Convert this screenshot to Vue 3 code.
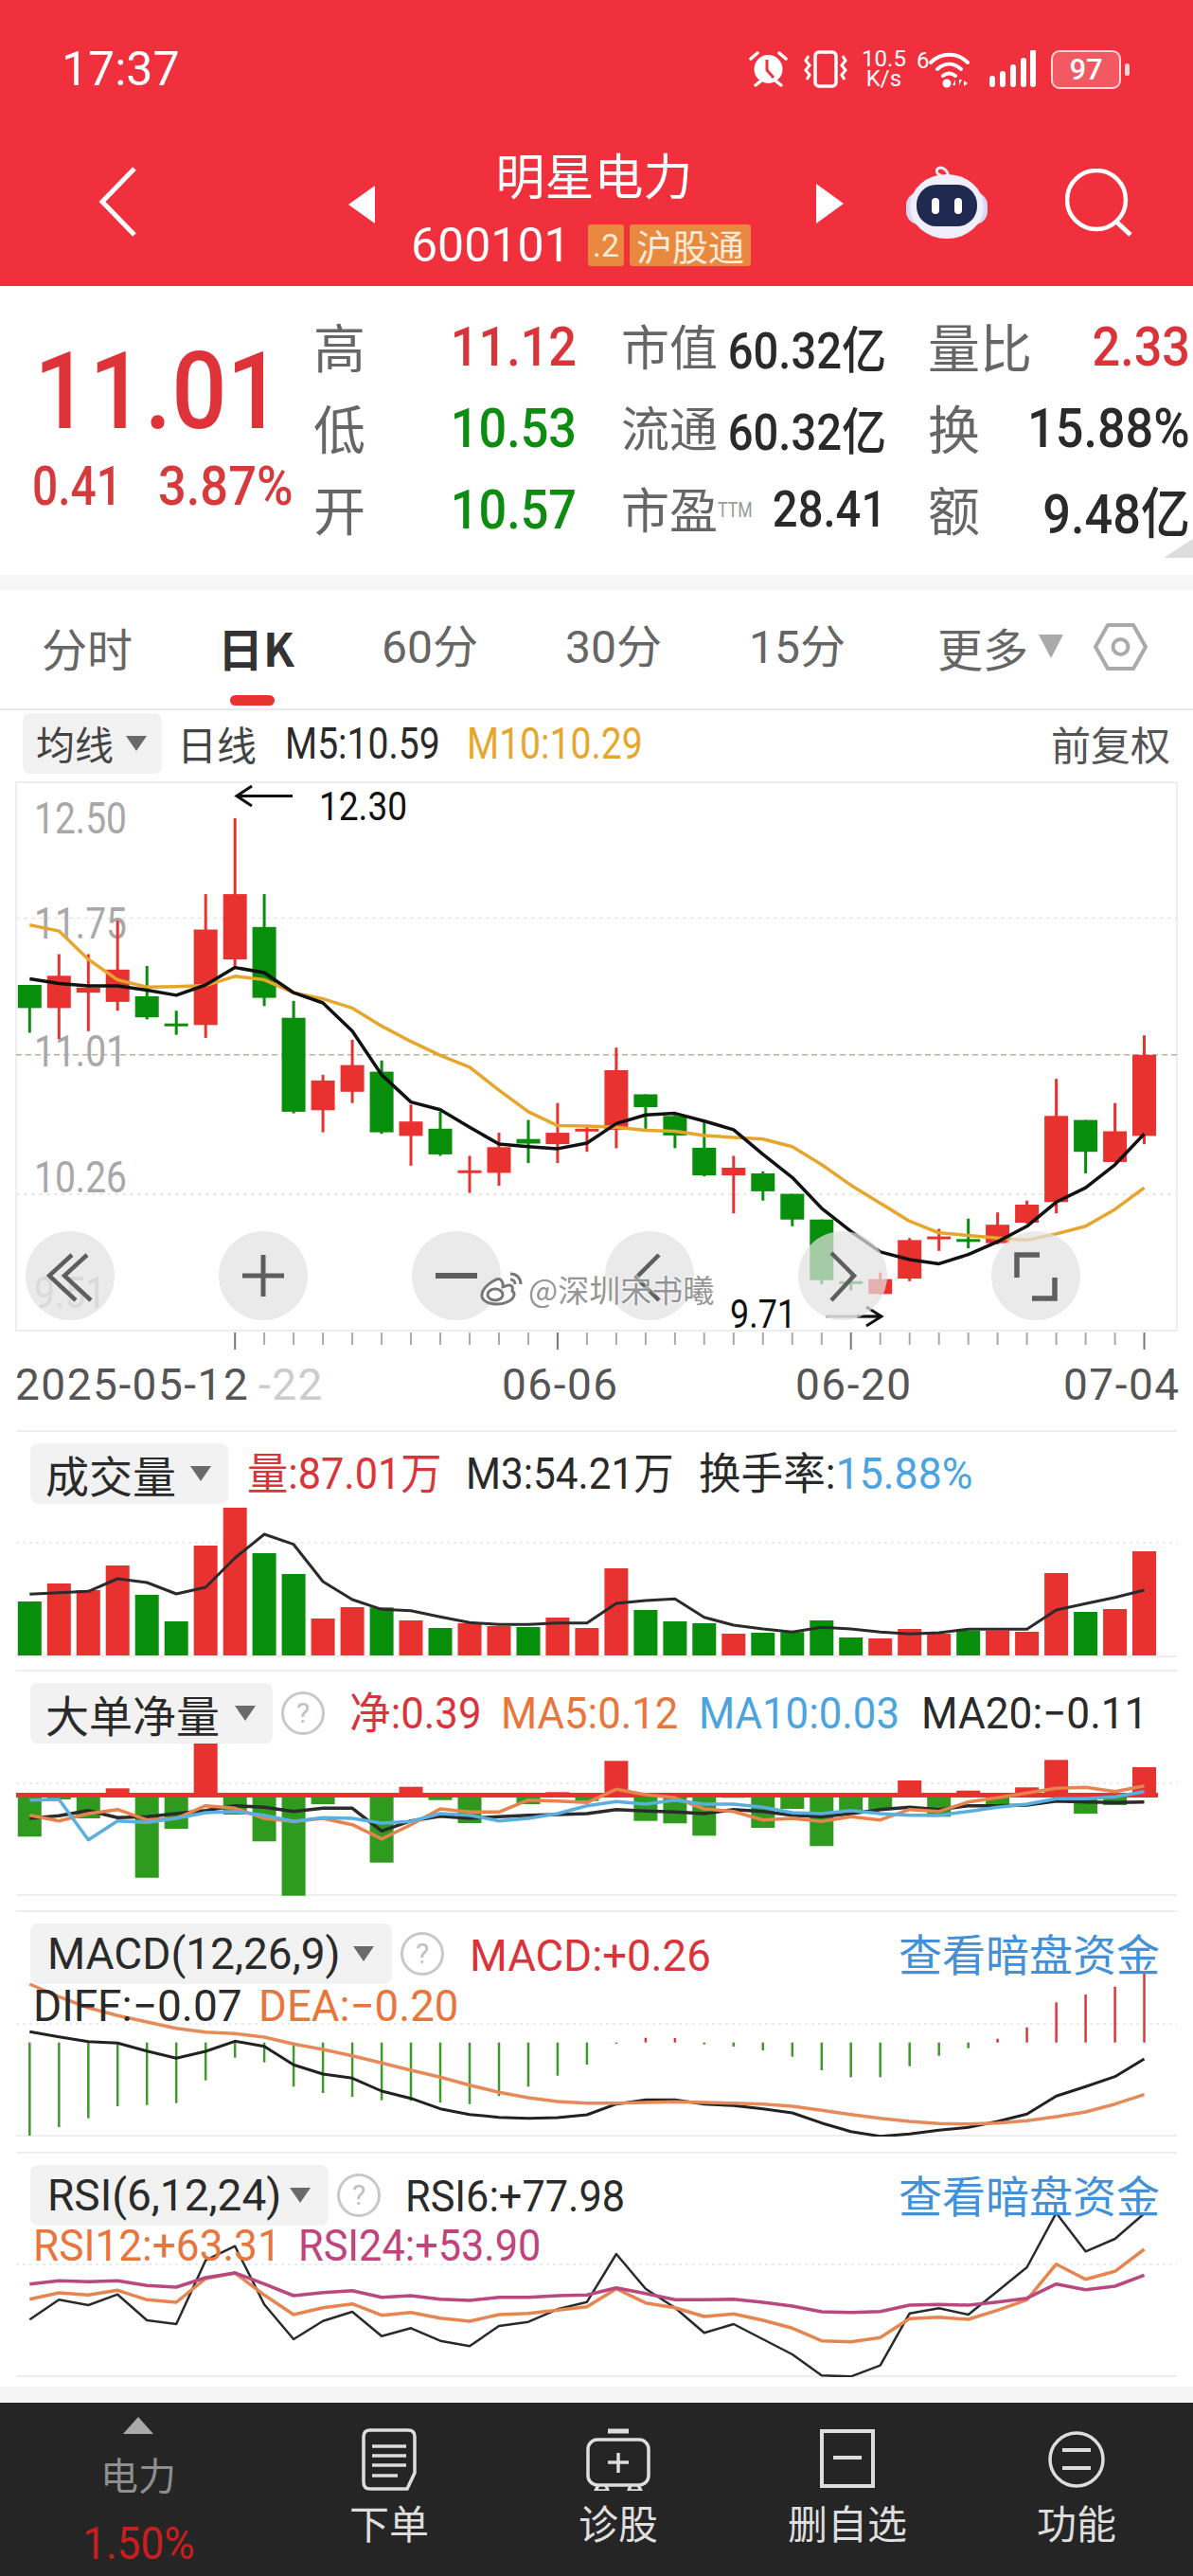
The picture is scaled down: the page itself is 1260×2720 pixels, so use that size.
<script setup>
const x = (i) => +(31.3 + i * 30.98).toFixed(1)
const kY = (z) => +(620 + z * 0.542).toFixed(1)
const y3 = (base) => (z) => +(base + z / 3).toFixed(1)
const y1490 = y3(1490)
const y2000 = y3(2000)
const R = '#e8322f'
const G = '#078e0a'
const G2 = '#2e9b1f'
const pts = (a, f) => a.map((v, i) => `${x(i)},${f(v)}`).join(' ')

const rawK = [
  [775,775,820,868,0],[715,757,820,880,1],[715,780,790,865,1],[650,745,808,825,1],[738,797,838,842,0],
  [825,850,853,872,0],[598,667,853,878,1],[450,598,725,740,1],[598,662,800,816,0],[806,839,1022,1025,0],
  [950,961,1019,1062,1],[882,931,983,1005,1],[922,944,1062,1065,0],[1008,1041,1069,1127,1],[1022,1055,1105,1108,0],
  [1108,1136,1139,1180,1],[1063,1091,1141,1166,1],[1038,1075,1084,1122,0],[1005,1063,1085,1122,1],[1050,1055,1058,1100,1],
  [897,941,1057,1093,1],[988,988,1013,1055,0],[1028,1030,1068,1093,0],[1040,1092,1146,1148,0],[1108,1131,1146,1220,1],
  [1138,1142,1177,1195,0],[1182,1182,1232,1245,0],[1232,1232,1350,1358,0],[1340,1352,1356,1370,0],[1335,1348,1377,1378,1],
  [1268,1272,1347,1352,1],[1250,1265,1268,1293,1],[1230,1270,1273,1288,0],[1218,1242,1278,1280,1],[1195,1203,1238,1240,1],
  [958,1030,1198,1220,1],[1038,1038,1100,1142,0],[1005,1060,1120,1120,1],[873,911,1069,1085,1]
]
const candles = rawK.map((c, i) => ({
  x: x(i), hi: kY(c[0]), top: kY(c[1]), h: Math.max(kY(c[2]) - kY(c[1]), 3), lo: kY(c[3]), c: c[4] ? R : G
}))
const ma5 = pts([763,772,777,777,785,795,775,741,751,790,810,865,950,1003,1018,1052,1085,1090,1094,1083,1045,1028,1025,1040,1057,1105,1150,1210,1255,1295,1310,1318,1300,1275,1245,1198,1170,1125,1065], kY)
const ma10 = pts([658,670,725,765,779,778,776,758,765,790,802,820,855,885,912,935,980,1022,1049,1050,1052,1058,1060,1068,1072,1075,1090,1125,1165,1200,1235,1258,1263,1268,1272,1260,1245,1212,1170], kY)
const ticks = Array.from({ length: 32 }, (_, i) => ({ x: x(i + 7), major: [0, 11, 21, 31].includes(i) }))
const buttons = ['dbl', 'plus', 'minus', 'left', 'right', 'full']

const volTops = [603,546,567,489,582,666,426,306,450,516,657,621,622,663,687,672,681,684,654,687,498,630,666,672,705,702,700,663,717,720,690,705,696,696,699,513,636,627,444]
const volUp = [0,1,1,1,0,0,1,1,0,0,1,1,0,1,0,1,1,0,1,1,1,0,0,0,1,0,0,0,0,1,1,1,0,1,1,1,0,1,1]
const volBars = volTops.map((t, i) => ({ x: x(i) - 12.5, y: y1490(t), h: 1748 - y1490(t), c: volUp[i] ? R : G }))
const volLine = pts([580,575,571,531,543,579,558,465,390,422,540,597,628,632,652,670,676,676,671,671,609,600,595,653,678,690,700,685,690,700,706,702,691,691,691,630,610,590,567], y1490)

const netEnds = [1348,1230,1290,1195,1478,1323,1030,1278,1363,1535,1245,1218,1430,1190,1232,1305,1212,1245,1207,1235,1108,1298,1306,1345,1225,1320,1260,1378,1270,1262,1170,1285,1202,1245,1192,1105,1275,1248,1128]
const base = y1490(1218)
const netBars = netEnds.map((e, i) => {
  const v = y1490(e)
  return { x: x(i) - 12.5, y: Math.min(v, base), h: Math.abs(v - base), c: v < base ? R : G2 }
})
const netMa5 = pts([1280,1298,1275,1262,1295,1290,1250,1258,1290,1300,1290,1310,1355,1310,1260,1270,1270,1232,1235,1240,1198,1215,1225,1260,1268,1295,1290,1300,1285,1295,1262,1268,1238,1225,1210,1195,1192,1205,1187], y1490)
const netMa10 = pts([1232,1230,1358,1298,1303,1290,1272,1268,1280,1300,1288,1290,1305,1300,1275,1280,1298,1290,1275,1250,1237,1245,1232,1245,1245,1255,1272,1275,1265,1275,1280,1280,1268,1255,1245,1228,1228,1222,1205], y1490)
const netMa20 = pts([1290,1282,1265,1288,1285,1275,1265,1250,1255,1268,1258,1258,1330,1298,1283,1290,1285,1280,1278,1275,1262,1267,1270,1275,1262,1268,1280,1285,1275,1262,1255,1262,1250,1250,1248,1235,1238,1240,1238], y1490)

const macdEnds = [765,738,710,672,668,662,590,518,533,610,630,642,653,655,660,665,640,610,575,540,474,455,456,476,483,495,515,558,580,580,545,512,488,458,422,343,318,293,250]
const macdBars = macdEnds.map((e, i) => ({
  x: x(i), y1: y2000(470), y2: y2000(e), c: e < 470 ? '#d8383a' : '#3f9a2c'
}))
const diff = pts([436,452,467,472,497,520,498,466,482,541,570,583,624,647,680,698,707,710,708,699,665,652,652,665,670,680,693,725,752,767,760,748,739,720,697,640,610,578,522], y2000)
const dea = pts([285,325,360,385,405,425,437,442,453,475,492,512,535,558,580,605,628,645,657,662,662,660,658,660,662,665,672,685,698,710,720,727,728,725,718,705,690,665,635], y2000)

const rsi6 = pts([1348,1285,1302,1268,1350,1362,1160,1115,1300,1410,1352,1323,1400,1375,1415,1432,1368,1355,1315,1292,1140,1250,1310,1390,1362,1410,1458,1525,1528,1493,1328,1312,1332,1258,1182,1010,1132,1092,1012], y2000)
const rsi12 = pts([1283,1263,1270,1255,1285,1293,1218,1200,1270,1332,1310,1298,1334,1325,1343,1353,1332,1328,1318,1307,1250,1295,1310,1338,1330,1350,1375,1415,1418,1405,1345,1340,1347,1318,1285,1172,1220,1195,1125], y2000)
const rsi24 = pts([1235,1225,1228,1225,1240,1245,1215,1200,1235,1272,1262,1256,1277,1272,1283,1287,1277,1277,1272,1270,1247,1265,1285,1285,1283,1293,1305,1323,1325,1322,1302,1300,1302,1292,1280,1235,1253,1242,1207], y2000)
</script>

<template>
  <div class="page">
    <header class="header">
      <div class="status">
        <span class="time">17:37</span>
        <svg class="st-alarm" width="41" height="40" viewBox="0 0 41 40">
          <circle cx="20.5" cy="20" r="15" fill="#fff" />
          <path d="M19 10v11l7 8" fill="none" stroke="#f0303c" stroke-width="3" />
          <path d="M2 9l7-6M39 9l-7-6M7 37l5-4M34 37l-5-4" fill="none" stroke="#fff" stroke-width="3.5" stroke-linecap="round" />
        </svg>
        <svg class="st-vib" width="48" height="40" viewBox="0 0 48 40">
          <rect x="13" y="2" width="22" height="36" rx="4" fill="none" stroke="#fff" stroke-width="3.5" />
          <path d="M6 6l-3 5 4 5-4 5 4 5-3 5M42 6l3 5-4 5 4 5-4 5 3 5" fill="none" stroke="#fff" stroke-width="3" />
        </svg>
        <span class="st-speed"><b>10.5</b><b>K/s</b></span>
        <span class="st-six">6</span>
        <svg class="st-wifi" width="43" height="40" viewBox="0 0 43 40">
          <path d="M2 13C13 2 30 2 41 13M9 20c8-7 17-7 25 0M15 27c4-3 9-3 13 0" fill="none" stroke="#fff" stroke-width="4" stroke-linecap="round" />
          <circle cx="19" cy="35" r="4.5" fill="#fff" />
          <path d="M28 31l-3 6h3zM32 37l3-6h-3zM37 32v6l4-3z" fill="#fff" />
        </svg>
        <svg class="st-signal" width="49" height="40" viewBox="0 0 49 40">
          <g stroke="#fff" stroke-width="6" stroke-linecap="round">
            <path d="M3 30v6M14 25v11M25 18v18M36 11v25M46 2v34" />
          </g>
        </svg>
        <span class="st-batt"><i>97</i></span>
        <span class="st-nub"></span>
      </div>
      <div class="titlebar">
        <svg class="back" width="41" height="74" viewBox="0 0 41 74">
          <path d="M38 2L4 37l34 35" fill="none" stroke="#fff" stroke-width="5" />
        </svg>
        <svg class="prev" width="28" height="40" viewBox="0 0 28 40"><path d="M28 0v40L0 20z" fill="#fff" /></svg>
        <div class="title-col">
          <div class="name">明星电力</div>
          <div class="code-row">
            <span class="code">600101</span>
            <span class="chip small">.2</span>
            <span class="chip">沪股通</span>
          </div>
        </div>
        <svg class="next" width="29" height="42" viewBox="0 0 29 42"><path d="M0 0v42l29-21z" fill="#fff" /></svg>
        <svg class="robot" width="86" height="80" viewBox="0 0 86 80">
          <path d="M37 12c-6-1-6-7-1-8 4 0 7 2 9 9" fill="none" stroke="#f4e6ee" stroke-width="3" />
          <rect x="0" y="30" width="86" height="34" rx="14" fill="#d9d7f4" />
          <ellipse cx="43" cy="45" rx="39" ry="34" fill="#f1effc" />
          <rect x="11" y="22" width="64" height="44" rx="21" fill="#20294f" />
          <rect x="27" y="36" width="8" height="17" rx="4" fill="#fff" />
          <rect x="51" y="36" width="8" height="17" rx="4" fill="#fff" />
        </svg>
        <svg class="search" width="72" height="72" viewBox="0 0 72 72">
          <circle cx="33" cy="33" r="31" fill="none" stroke="#fff" stroke-width="4.5" />
          <path d="M54 56l15 14" stroke="#fff" stroke-width="5" fill="none" />
        </svg>
      </div>
    </header>

    <section class="quote">
      <div class="price-col">
        <div class="price">11.01</div>
        <div class="change"><span class="c1">0.41</span><span class="c2">3.87%</span></div>
      </div>
      <div class="quote-grid">
        <div class="cell"><span class="lab big">高</span><span class="val red">11.12</span></div>
        <div class="cell"><span class="lab">市值</span><span class="val2">60.32亿</span></div>
        <div class="cell"><span class="lab big">量比</span><span class="val red">2.33</span></div>
        <div class="cell"><span class="lab big">低</span><span class="val green">10.53</span></div>
        <div class="cell"><span class="lab">流通</span><span class="val2">60.32亿</span></div>
        <div class="cell"><span class="lab big">换</span><span class="val dark">15.88%</span></div>
        <div class="cell"><span class="lab big">开</span><span class="val green">10.57</span></div>
        <div class="cell"><span class="lab">市盈<sup>TTM</sup></span><span class="val2">28.41</span></div>
        <div class="cell"><span class="lab big">额</span><span class="val dark">9.48亿</span></div>
      </div>
      <span class="corner"></span>
    </section>
    <div class="strip"></div>

    <nav class="tabs">
      <span class="tab t1">分时</span>
      <span class="tab active">日K</span>
      <span class="tab t3">60分</span>
      <span class="tab t4">30分</span>
      <span class="tab t5">15分</span>
      <span class="tab t6">更多</span>
      <span class="tri tab-tri"></span>
      <svg class="hex" width="57" height="52" viewBox="0 0 57 52">
        <path d="M15 3h27l13 23-13 23H15L2 26z" fill="none" stroke="#aaa" stroke-width="4" stroke-linejoin="round" />
        <circle cx="28.5" cy="26" r="8" fill="none" stroke="#aaa" stroke-width="4" />
      </svg>
    </nav>

    <div class="k-legend">
      <span class="tag k-tag">均线<span class="tri"></span></span>
      <span class="dayline">日线</span>
      <span class="m5">M5:10.59</span>
      <span class="m10">M10:10.29</span>
      <span class="fq">前复权</span>
    </div>

    <div class="kchart">
      <svg class="layer" viewBox="0 825 1260 600" width="1260" height="600">
        <rect x="17" y="826" width="1226" height="579" fill="none" stroke="#eee" stroke-width="2" />
        <path d="M17 969.6H1243M17 1261H1243" stroke="#e3e3e3" stroke-width="1.5" stroke-dasharray="4 4" fill="none" />
        <path d="M17 1113.8H1243" stroke="#b7b29a" stroke-width="1.5" stroke-dasharray="6 4" fill="none" />
        <text class="ylab" x="36" y="880" textLength="98" lengthAdjust="spacingAndGlyphs">12.50</text>
        <text class="ylab" x="36" y="991" textLength="98" lengthAdjust="spacingAndGlyphs">11.75</text>
        <text class="ylab" x="36" y="1126" textLength="98" lengthAdjust="spacingAndGlyphs">11.01</text>
        <text class="ylab" x="36" y="1259" textLength="98" lengthAdjust="spacingAndGlyphs">10.26</text>
        <text class="ylab faint" x="36" y="1381" textLength="76" lengthAdjust="spacingAndGlyphs">9.51</text>
        <g v-for="c in candles" :key="c.x">
          <line :x1="c.x" :x2="c.x" :y1="c.hi" :y2="c.lo" :stroke="c.c" stroke-width="3" />
          <rect :x="c.x - 12.5" :y="c.top" width="25" :height="c.h" :fill="c.c" />
        </g>
        <polyline :points="ma10" fill="none" stroke="#e6a62c" stroke-width="3.500" stroke-linejoin="round" />
        <polyline :points="ma5" fill="none" stroke="#111" stroke-width="3.500" stroke-linejoin="round" />
        <g v-for="t in ticks" :key="t.x">
          <line :x1="t.x" :x2="t.x" y1="1407" :y2="t.major ? 1428 : 1420" :stroke="t.major ? '#777' : '#aaa'" stroke-width="2" />
        </g>
        <path d="M309 840.5H252M266 830l-16 10.500 16 10.500" fill="none" stroke="#111" stroke-width="3" />
        <text class="note" x="337" y="866" textLength="93" lengthAdjust="spacingAndGlyphs">12.30</text>
        <text class="note" x="771" y="1402" textLength="70" lengthAdjust="spacingAndGlyphs">9.71</text>
        <path d="M872 1390H929" fill="none" stroke="#888" stroke-width="3" />
        <path d="M905 1390H929M915 1380l16 10-16 10" fill="none" stroke="#111" stroke-width="3" />
      </svg>

      <div class="ctl-row">
        <span v-for="b in buttons" :key="b" class="ctl">
          <svg width="60" height="60" viewBox="0 0 60 60" fill="none" stroke="#5e5e5e" stroke-width="4.500">
            <path v-if="b === 'dbl'" d="M32 8L8 30l28 26M48 8L24 30l28 26" />
            <path v-else-if="b === 'plus'" d="M30 8v44M8 30h44" stroke-width="5" />
            <path v-else-if="b === 'minus'" d="M8 30h44" stroke-width="6" />
            <path v-else-if="b === 'left'" d="M40 8L16 32l24 24" />
            <path v-else-if="b === 'right'" d="M18 6l24 24-24 26" />
            <path v-else d="M34 8H10v24M26 54h24V32" stroke-width="5.500" />
          </svg>
        </span>
      </div>

      <div class="wm">
        <svg width="48" height="38" viewBox="0 0 48 38" fill="none" stroke="#777" stroke-width="3">
          <path d="M18 9C8 14 2 21 3 27c2 8 17 10 26 6 8-3 10-9 6-12 1-3 0-6-3-6-3 0-6 2-7 2 1-5-2-10-7-8z" fill="#fff" />
          <ellipse cx="17" cy="25" rx="8" ry="6" />
          <path d="M33 3c6 0 11 4 11 11M33 9c3 0 5 2 5 5" />
        </svg>
        <span>@深圳宋书曦</span>
      </div>
    </div>

    <div class="dates">
      <span class="d1">2025-05-12</span>
      <span class="d2">-22</span>
      <span class="d3">06-06</span>
      <span class="d4">06-20</span>
      <span class="d5">07-04</span>
    </div>

    <section class="panel vol">
      <svg class="layer" viewBox="17 1510 1226 240" width="1226" height="240">
        <path d="M17 1511H1243" stroke="#eee" stroke-width="2" fill="none" />
        <path d="M17 1629H1243" stroke="#e6e6e6" stroke-width="1.500" stroke-dasharray="3 4" fill="none" />
        <rect v-for="b in volBars" :key="b.x" :x="b.x" :y="b.y" width="25" :height="b.h" :fill="b.c" />
        <polyline :points="volLine" fill="none" stroke="#2b2b2b" stroke-width="3" stroke-linejoin="round" />
        <path d="M17 1749H1243" stroke="#eee" stroke-width="2" fill="none" />
      </svg>
      <div class="legend">
        <span class="tag vol-tag">成交量<span class="tri"></span></span>
        <span class="l s94 red-t v1">量:87.01万</span>
        <span class="l s92 dark-t v2">M3:54.21万</span>
        <span class="l s97 dark-t v3">换手率:<em class="blue-t">15.88%</em></span>
      </div>
    </section>

    <section class="panel net">
      <svg class="layer" viewBox="17 1763 1226 239" width="1226" height="239">
        <path d="M17 1764H1243M17 2001H1243" stroke="#eee" stroke-width="2" fill="none" />
        <path d="M17 1883H1243" stroke="#e6e6e6" stroke-width="1.500" stroke-dasharray="3 4" fill="none" />
        <rect v-for="b in netBars" :key="b.x" :x="b.x" :y="b.y" width="25" :height="b.h" :fill="b.c" />
        <rect x="17" y="1893" width="1206" height="5" fill="#e8322f" />
        <polyline :points="netMa20" fill="none" stroke="#2b2b2b" stroke-width="3.500" stroke-linejoin="round" />
        <polyline :points="netMa5" fill="none" stroke="#e8824e" stroke-width="3.500" stroke-linejoin="round" />
        <polyline :points="netMa10" fill="none" stroke="#5aaee0" stroke-width="3.500" stroke-linejoin="round" />
      </svg>
      <div class="legend net-legend">
        <span class="tag net-tag">大单净量<span class="tri"></span></span>
        <span class="help net-help">?</span>
        <span class="l s95 red-t n1">净:0.39</span>
        <span class="l s95 orange-t n2">MA5:0.12</span>
        <span class="l s95 blue-t n3">MA10:0.03</span>
        <span class="l s96 dark-t n4">MA20:−0.11</span>
      </div>
    </section>

    <section class="panel macd">
      <svg class="layer" viewBox="17 2017 1226 239" width="1226" height="239">
        <path d="M17 2018H1243M17 2255H1243" stroke="#eee" stroke-width="2" fill="none" />
        <path d="M17 2137H1243" stroke="#e6e6e6" stroke-width="1.500" stroke-dasharray="3 4" fill="none" />
        <line v-for="b in macdBars" :key="b.x" :x1="b.x" :x2="b.x" :y1="b.y1" :y2="b.y2" :stroke="b.c" stroke-width="2.500" />
        <polyline :points="diff" fill="none" stroke="#222" stroke-width="3" stroke-linejoin="round" />
        <polyline :points="dea" fill="none" stroke="#e58a58" stroke-width="3.500" stroke-linejoin="round" />
      </svg>
      <div class="legend">
        <span class="tag macd-tag">MACD(12,26,9)<span class="tri"></span></span>
        <span class="help macd-help">?</span>
        <span class="l s99 red-t m1">MACD:+0.26</span>
        <span class="link">查看暗盘资金</span>
      </div>
      <div class="legend2 macd2">
        <span class="l dark-t g1">DIFF:−0.07</span>
        <span class="l s99 orange-t">DEA:−0.20</span>
      </div>
    </section>

    <section class="panel rsi">
      <svg class="layer" viewBox="17 2272 1226 238" width="1226" height="238">
        <path d="M17 2273H1243M17 2509H1243" stroke="#eee" stroke-width="2" fill="none" />
        <path d="M17 2391H1243" stroke="#e6e6e6" stroke-width="1.500" stroke-dasharray="3 4" fill="none" />
        <polyline :points="rsi6" fill="none" stroke="#2a2a2a" stroke-width="2.500" stroke-linejoin="round" />
        <polyline :points="rsi12" fill="none" stroke="#e5854f" stroke-width="3.500" stroke-linejoin="round" />
        <polyline :points="rsi24" fill="none" stroke="#b9487e" stroke-width="3.500" stroke-linejoin="round" />
      </svg>
      <div class="legend">
        <span class="tag rsi-tag">RSI(6,12,24)<span class="tri"></span></span>
        <span class="help rsi-help">?</span>
        <span class="l s94 dark-t r1">RSI6:+77.98</span>
        <span class="link">查看暗盘资金</span>
      </div>
      <div class="legend2 rsi2">
        <span class="l s96 orange-t g3">RSI12:+63.31</span>
        <span class="l s94 purple-t">RSI24:+53.90</span>
      </div>
    </section>

    <div class="foot-strip"></div>

    <footer class="bottom">
      <div class="b-item first">
        <span class="up"></span>
        <span class="b-name">电力</span>
        <span class="b-pct">1.50%</span>
      </div>
      <div class="b-item">
        <svg width="58" height="66" viewBox="0 0 58 66" fill="none" stroke="#ddd" stroke-width="3.500">
          <path d="M9 2h40q7 0 7 7v38l-8 17H9q-7 0-7-7V9q0-7 7-7z" />
          <path d="M11 19h36M11 29h36M11 39h36M11 50h27" />
        </svg>
        <span>下单</span>
      </div>
      <div class="b-item">
        <svg width="68" height="66" viewBox="0 0 68 66" fill="none" stroke="#ddd" stroke-width="3.500">
          <path d="M23 3h22" stroke-width="5" />
          <rect x="2" y="12" width="64" height="48" rx="10" />
          <path d="M34 26v21M23 36h22M13 60l-3 6h13l-2-6M47 60l-2 6h13l-3-6" />
        </svg>
        <span>诊股</span>
      </div>
      <div class="b-item">
        <svg width="58" height="66" viewBox="0 0 58 66" fill="none" stroke="#ddd" stroke-width="4">
          <rect x="2" y="3" width="54" height="58" />
          <path d="M14 31h30" />
        </svg>
        <span>删自选</span>
      </div>
      <div class="b-item">
        <svg width="60" height="66" viewBox="0 0 60 66" fill="none" stroke="#ddd" stroke-width="3.500">
          <circle cx="30" cy="33" r="28" />
          <path d="M15 23h30M15 42h30" stroke-width="4" />
        </svg>
        <span>功能</span>
      </div>
    </footer>
  </div>
</template>

<style scoped>
.page {
  width: 1260px;
  height: 2720px;
  overflow: hidden;
  background: #fff;
  color: #222;
  font-family: "Roboto", "Noto Sans CJK SC", sans-serif;
}
.header {
  height: 302px;
  background: #f0303c;
  color: #fff;
}
.status {
  height: 146px;
  display: flex;
  align-items: center;
  padding-left: 65px;
}
.time {
  flex: none;
  font: 50px "Roboto", sans-serif;
  margin-right: auto;
}
.st-alarm { margin-right: 16px; }
.st-vib { margin-right: 13px; }
.st-speed {
  display: flex;
  flex-direction: column;
  width: 49px;
  margin-right: 10px;
  font: 24px/21px "Roboto", sans-serif;
  text-align: center;
}
.st-speed b { font-weight: 400; }
.st-six {
  font: 24px "Roboto", sans-serif;
  width: 13px;
  margin-top: -18px;
}
.st-wifi { margin-right: 21px; }
.st-signal { margin-right: 16px; }
.st-batt {
  box-sizing: border-box;
  width: 74px;
  height: 41px;
  border: 2.5px solid #ffd6d8;
  border-radius: 9px;
  background: rgba(255, 255, 255, 0.2);
  display: flex;
  align-items: center;
  justify-content: center;
}
.st-batt i {
  font: 500 31px "Roboto", sans-serif;
}
.st-nub {
  width: 5px;
  height: 13px;
  margin: 0 67px 0 4px;
  border-radius: 3px;
  background: #ffd6d8;
}
.titlebar {
  display: flex;
  align-items: flex-start;
  height: 156px;
}
.back { margin: 30px 0 0 104px; }
.prev { margin: 50px 0 0 223px; }
.title-col {
  width: 359px;
  margin-left: 38px;
  display: flex;
  flex-direction: column;
}
.name {
  height: 76px;
  font: 52px/76px "Noto Sans CJK SC", sans-serif;
  text-align: center;
  padding-left: 28px;
}
.code-row {
  display: flex;
  align-items: center;
  height: 74px;
}
.code {
  font: 50px/74px "Roboto", sans-serif;
  width: 187px;
}
.chip {
  box-sizing: border-box;
  height: 44px;
  width: 128px;
  background: #e8893f;
  border-radius: 3px;
  color: #ffe9d6;
  font: 38px/44px "Noto Sans CJK SC", sans-serif;
  text-align: center;
}
.chip.small {
  width: 38px;
  margin-right: 6px;
  font: 34px/44px "Roboto", sans-serif;
}
.next { margin: 48px 0 0 69px; }
.robot { margin: 27px 0 0 66px; }
.search { margin: 32px 0 0 82px; }

.quote {
  position: relative;
  height: 305px;
  display: flex;
}
.price-col {
  width: 333px;
  padding: 53px 0 0 36px;
  box-sizing: border-box;
  white-space: nowrap;
}
.price {
  font-size: 114px;
  font-weight: 500;
  line-height: 117px;
  color: #de3339;
  transform: scaleX(0.9);
  transform-origin: left center;
}
.change {
  margin: 13px 0 0 -2px;
  display: flex;
  font-size: 57px;
  font-weight: 500;
  line-height: 58px;
  color: #d63a3c;
}
.c1 {
  flex: none;
  width: 133px;
  transform: scaleX(0.84);
  transform-origin: left center;
}
.c2 {
  flex: none;
  transform: scaleX(0.92);
  transform-origin: left center;
}
.quote-grid {
  display: grid;
  grid-template-columns: 276px 275px 275px;
  column-gap: 49px;
  grid-auto-rows: 86px;
  padding-top: 21px;
}
.cell {
  display: flex;
  justify-content: space-between;
  align-items: center;
  white-space: nowrap;
}
.lab {
  flex: none;
  font: 51px "Noto Sans CJK SC", sans-serif;
  color: #666;
  line-height: 86px;
  margin: -5px 0 0 -2px;
}
.lab.big { font-size: 55px; }
.lab sup {
  font: 22px "Roboto", sans-serif;
  color: #999;
  vertical-align: 12px;
  line-height: 0;
  display: inline-block;
  transform: scaleX(0.8);
  transform-origin: left center;
}
.val {
  flex: none;
  margin-left: -60px;
  font-size: 58px;
  font-weight: 500;
  transform: scaleX(0.9);
  transform-origin: right center;
}
.val2 {
  flex: none;
  margin: 0 -3px 0 -60px;
  font-size: 53px;
  font-weight: 500;
  color: #2a2a2a;
  transform: scaleX(0.89);
  transform-origin: right center;
}
.red { color: #d8343a; }
.green { color: #0d8c12; }
.dark { color: #2a2a2a; }
.corner {
  position: absolute;
  right: 0;
  bottom: 18px;
  width: 0;
  height: 0;
  border-left: 31px solid transparent;
  border-bottom: 20px solid #ddd;
}
.strip {
  height: 16px;
  background: #f6f6f6;
}

.tabs {
  position: relative;
  box-sizing: border-box;
  height: 127px;
  border-bottom: 2px solid #e8e8e8;
  display: flex;
  align-items: center;
  padding: 0 0 6px 44px;
  font: 48px "Noto Sans CJK SC", sans-serif;
  color: #666;
}
.tab { line-height: 1; }
.tab.t1 { width: 186px; }
.tab.active {
  position: relative;
  width: 173px;
  color: #333;
  font-weight: 700;
}
.tab.active::after {
  content: "";
  position: absolute;
  left: 13px;
  bottom: -38px;
  width: 47px;
  height: 11px;
  border-radius: 6px;
  background: #e8322f;
}
.tab.t3, .tab.t4, .tab.t5 {
  width: 194px;
  margin-top: 3px;
  font-family: "Roboto", "Noto Sans CJK SC", sans-serif;
}
.tab.t5 { width: 199px; }
.tab.t6 { width: 107px; }
.tri {
  display: inline-block;
  width: 0;
  height: 0;
  flex: none;
  border-left: 11px solid transparent;
  border-right: 11px solid transparent;
  border-top: 16px solid #6b6b6b;
}
.tab-tri {
  border-left-width: 13px;
  border-right-width: 13px;
  border-top: 25px solid #aaa;
}
.hex { margin-left: 32px; }

.k-legend {
  height: 75px;
  display: flex;
  align-items: center;
  padding: 0 24px 6px 24px;
  box-sizing: border-box;
  font: 42px "Noto Sans CJK SC", sans-serif;
}
.tag {
  box-sizing: border-box;
  height: 64px;
  background: #f2f2f2;
  border-radius: 8px;
  display: flex;
  align-items: center;
  justify-content: space-between;
  color: #2a2a2a;
  line-height: 1;
  flex: none;
}
.k-legend .k-tag {
  width: 147px;
  padding: 0 16px 0 14px;
  color: #444;
  font-size: 41px;
}
.dayline { flex: none; margin-left: 16px; color: #444; width: 114px; }
.m5 {
  flex: none;
  margin-left: 0;
  font: 46px "Roboto", sans-serif;
  color: #2a2a2a;
  width: 192px;
  transform: scaleX(0.85);
  transform-origin: left center;
}
.m10 {
  flex: none;
  font: 46px "Roboto", sans-serif;
  color: #e6a62c;
  transform: scaleX(0.85);
  transform-origin: left center;
}
.fq { margin-left: auto; color: #555; }

.kchart {
  position: relative;
  height: 600px;
}
.layer {
  position: absolute;
  left: 0;
  top: 0;
  display: block;
}
.ylab {
  font-size: 46px;
  fill: #a8a8a8;
}
.ylab.faint { fill: #c6c6c6; }
.note {
  font-size: 42px;
  fill: #111;
}
.ctl-row {
  position: absolute;
  left: 27px;
  top: 475px;
  display: flex;
  gap: 110px;
}
.ctl {
  width: 94px;
  height: 94px;
  border-radius: 50%;
  background: rgba(226, 226, 226, 0.72);
  display: flex;
  align-items: center;
  justify-content: center;
}
.wm {
  position: absolute;
  left: 506px;
  top: 512px;
  display: flex;
  align-items: center;
  gap: 4px;
  font: 33px "Noto Sans CJK SC", sans-serif;
  color: rgba(135, 135, 135, 0.9);
  text-shadow: 0 0 3px #fff, 0 0 3px #fff;
  white-space: nowrap;
}
.dates {
  height: 70px;
  display: flex;
  align-items: center;
  font: 46px "Roboto", sans-serif;
  color: #555;
  letter-spacing: 1.5px;
  padding: 4px 0 0 16px;
  box-sizing: border-box;
}
.d1 { width: 257px; }
.d2 { width: 257px; color: #ccc; }
.d3 { width: 310px; }
.d4 { width: 283px; }

.panel {
  position: relative;
  margin: 0 17px;
}
.vol { height: 240px; margin-top: 15px; }
.net { height: 239px; margin-top: 13px; }
.macd { height: 239px; margin-top: 15px; }
.rsi { height: 238px; margin-top: 16px; }
.legend {
  position: relative;
  display: flex;
  align-items: center;
  height: 64px;
  padding-left: 15px;
  top: 14px;
  white-space: nowrap;
}
.tag {
  font-family: "Noto Sans CJK SC", sans-serif;
  font-size: 46px;
}
.vol-tag { width: 209px; padding: 0 18px 0 16px; }
.net-tag { width: 256px; padding: 0 18px 0 16px; }
.macd-tag {
  width: 382px;
  padding: 0 19px 0 18px;
  font-family: "Roboto", sans-serif;
}
.rsi-tag {
  width: 315px;
  padding: 0 19px 0 18px;
  font-family: "Roboto", sans-serif;
}
.l {
  flex: none;
  font-family: "Roboto", "Noto Sans CJK SC", sans-serif;
  font-size: 46px;
  line-height: 1;
  transform-origin: left center;
}
.l em { font-style: normal; }
.s92 { transform: scaleX(0.92); }
.s94 { transform: scaleX(0.94); }
.s95 { transform: scaleX(0.95); }
.s96 { transform: scaleX(0.96); }
.s97 { transform: scaleX(0.97); }
.s99 { transform: scaleX(0.99); }
.red-t { color: #d8343a; }
.dark-t { color: #2a2a2a; }
.blue-t { color: #4ba3e0; }
.orange-t { color: #e8763c; }
.purple-t { color: #c0437c; }
.v1 { margin-left: 20px; width: 231px; }
.v2 { width: 246px; }
.help {
  box-sizing: border-box;
  width: 46px;
  height: 46px;
  border: 3px solid #c8c8c8;
  border-radius: 50%;
  color: #c0c0c0;
  font: 30px/40px "Roboto", sans-serif;
  text-align: center;
  flex: none;
}
.net-help { margin-left: 9px; }
.n1 { margin-left: 26px; width: 160px; }
.n2 { width: 209px; }
.n3 { width: 235px; }
.macd-help { margin-left: 9px; }
.m1 { margin-left: 27px; margin-top: 4px; }
.rsi-help { margin-left: 9px; }
.r1 { margin-left: 26px; margin-top: 2px; }
.link {
  position: absolute;
  right: 18px;
  top: 0;
  font: 46px/60px "Noto Sans CJK SC", sans-serif;
  color: #4290d8;
}
.legend2 {
  position: relative;
  margin-left: 18px;
  display: flex;
  white-space: nowrap;
  height: 52px;
  align-items: center;
}
.macd2 { top: 11px; }
.rsi2 { top: 9px; }
.g1 { width: 238px; }
.g3 { width: 280px; }
.foot-strip {
  height: 17px;
  margin-top: 10px;
  background: #f5f5f5;
}
.bottom {
  height: 183px;
  background: #252525;
  display: grid;
  grid-template-columns: 288px repeat(4, 242px);
  padding-left: 2px;
}
.b-item {
  display: flex;
  flex-direction: column;
  align-items: center;
  padding-top: 27px;
  box-sizing: border-box;
  font: 42px/1 "Noto Sans CJK SC", sans-serif;
  color: #ddd;
}
.b-item svg { margin-bottom: 12px; }
.b-item.first { padding-top: 15px; }
.up {
  width: 0;
  height: 0;
  border-left: 16px solid transparent;
  border-right: 16px solid transparent;
  border-bottom: 18px solid #aaa;
}
.b-name {
  margin-top: 22px;
  color: #8e8e8e;
  font-size: 40px;
}
.b-pct {
  margin-top: 30px;
  color: #c81e1e;
  font: 48px/1 "Roboto", sans-serif;
  transform: scaleX(0.92);
}
</style>
